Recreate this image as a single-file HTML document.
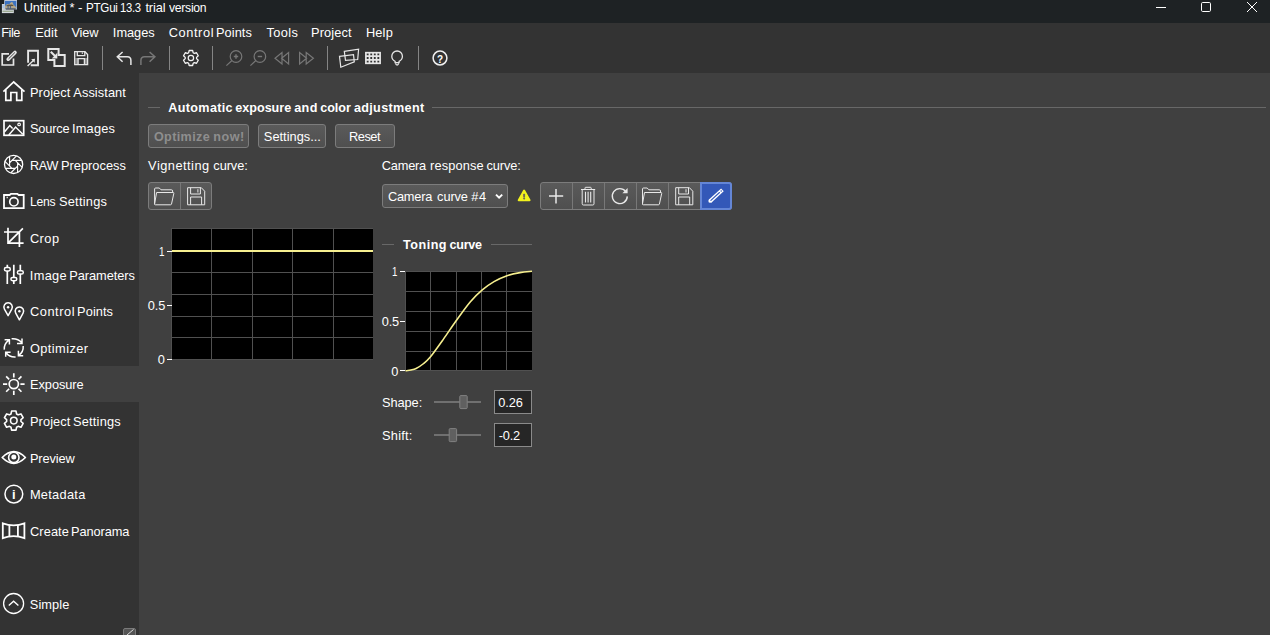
<!DOCTYPE html>
<html lang="en"><head><meta charset="utf-8"><title>Untitled * - PTGui 13.3 trial version</title>
<style>
html,body{margin:0;padding:0;background:#333;}
body{width:1270px;height:635px;overflow:hidden;}
#app{position:relative;width:1270px;height:635px;background:#333333;overflow:hidden;font-family:"Liberation Sans",sans-serif;color:#fff;}
.t{position:absolute;left:0;white-space:nowrap;line-height:16px;height:16px;width:0;color:#fff;}
.t span{position:absolute;top:0;white-space:pre;transform-origin:0 0;}
.b{position:absolute;box-sizing:border-box;}
#titlebar{left:0;top:0;width:1270px;height:23px;background:#1e2224;}
#content{left:139px;top:73px;width:1131px;height:562px;background:#404040;}
#sel{left:0;top:366px;width:139px;height:36px;background:#404040;}
.btn{border:1px solid #7c7c7c;border-radius:3px;background:linear-gradient(#5a5a5a,#4f4f4f);}
.inp{border:1px solid #8a8a8a;background:#262626;}
svg#g{position:absolute;left:0;top:0;}

</style></head>
<body>
<div id="app">
<div class="b" id="titlebar"></div>
<div class="b" id="content"></div>
<div class="b" id="sel"></div>
<div class="b btn" style="left:148px;top:124px;width:101px;height:24px;"></div>
<div class="b btn" style="left:258px;top:124px;width:68px;height:24px;"></div>
<div class="b btn" style="left:335px;top:124px;width:60px;height:24px;"></div>
<div class="b btn" style="left:148px;top:182px;width:64px;height:28px;"></div>
<div class="b btn" style="left:382px;top:184px;width:126px;height:24px;"></div>
<div class="b btn" style="left:540px;top:182px;width:192px;height:28px;"></div>
<div class="b" style="left:700px;top:182px;width:32px;height:28px;background:#3358b8;border:2px solid #6486d6;border-radius:0 3px 3px 0;"></div>
<div class="b inp" style="left:494px;top:390px;width:38px;height:24px;"></div>
<div class="b inp" style="left:494px;top:423px;width:38px;height:24px;"></div>

<svg id="g" width="1270" height="635" viewBox="0 0 1270 635" fill="none" stroke="#fff" stroke-width="1.6" stroke-linecap="butt" stroke-linejoin="miter">
<g stroke-width="1"><path d="M1156 7.5h10"/><rect x="1201.5" y="2.5" width="9" height="9" rx="1.2"/><path d="M1247 2l10 10M1257 2l-10 10"/></g>
<g stroke="none"><rect x="1.9" y="4" width="11.9" height="9.1" fill="#d9dde0"/><rect x="2.5" y="4.6" width="10.7" height="7.6" fill="#c9cfd2"/><rect x="2.5" y="4.6" width="3" height="3.4" fill="#a6c2e6"/><rect x="2.5" y="10.8" width="10.7" height="1" fill="#93a386"/><rect x="4.2" y="0" width="12.8" height="9.5" fill="#b9c6da"/><rect x="5" y="1" width="11.3" height="7.6" fill="#3c73c2"/><path d="M5 8.6V6.3L6.4 4.6L8 3.9L9.2 4.4L10.2 3L11.6 2L12.8 2.6L13.4 4.4L14.8 6L16.3 7.2V8.6Z" fill="#b3a688"/><path d="M7.6 5.2h1v3.2h-1zM9.9 5h1v3.4h-1z" fill="#3f5f94"/><path d="M6.3 5.6L8 4.8L12 4.6L13.6 5.4L13.2 6L6.6 6.2Z" fill="#5d5443"/><rect x="5.8" y="8.6" width="9.8" height="0.9" fill="#2b2d30"/></g>
<g stroke="#858585" stroke-width="1"><path d="M102.5 46v24M169.5 46v24M212.5 46v24M327.5 46v24M418.5 46v24"/></g>
<g stroke="#e6e6e6" stroke-width="1.7">
<path d="M9 53.9H2.2V65H13.5V58.6"/>
<path d="M8.2 59.2L15 52.4" stroke-width="3.6" stroke-linecap="round"/>
<path d="M8.9 58.5L14.6 52.8" stroke="#333" stroke-width="0.9" stroke-linecap="round"/>
<path d="M28.1 62.8V50.8H38V65.2H30.7" stroke-width="1.9"/>
<path d="M27.6 66L33.6 60.2" stroke-width="1.4"/>
<path d="M35 58.8L31.2 59.3L34.6 62.7Z" fill="#e6e6e6" stroke="none"/>
<path d="M48.3 49H58.6V55H64.7V66H54.4V60H48.3Z" stroke-width="2"/>
<path d="M50.8 51.8L55.5 56.5" stroke-width="2"/>
<path d="M57.3 58.4V52.8L51.8 58.4Z" fill="#e6e6e6" stroke="none"/>
</g>
<g stroke="#e6e6e6" stroke-width="1.3">
<path d="M75.3 64.5V58H78V64.5ZM84.6 64.5V58H87.2V64.5Z" fill="#8c8c8c" stroke="none"/>
<path d="M74.7 51.7H85L87.6 54.6V64.6H74.7Z"/>
<path d="M77.3 51.7V55.6H84.8V51.7"/>
<path d="M82.3 52.3V54" stroke-width="1"/>
<path d="M78.1 64.6V58.7H84.4V64.6"/>
</g>
<path d="M122.6 52L117.3 56.7L122.6 61.8M117.6 56.7H127.4Q130.9 56.7 130.9 60.6V65" stroke="#e6e6e6" stroke-width="1.5"/>
<path d="M149.6 52L154.9 56.7L149.6 61.8M154.6 56.7H144.6Q140.9 56.7 140.9 60.6V65" stroke="#777" stroke-width="1.5"/>
<path d="M188.58 52.79 L189.17 50.50 L192.63 50.50 L193.22 52.79 L194.25 53.39 L196.53 52.75 L198.26 55.75 L196.57 57.40 L196.57 58.60 L198.26 60.25 L196.53 63.25 L194.25 62.61 L193.22 63.21 L192.63 65.50 L189.17 65.50 L188.58 63.21 L187.55 62.61 L185.27 63.25 L183.54 60.25 L185.23 58.60 L185.23 57.40 L183.54 55.75 L185.27 52.75 L187.55 53.39Z" stroke="#f4f4f4" stroke-width="1.3" stroke-linejoin="round"/>
<circle cx="190.9" cy="58" r="2.7" stroke="#f4f4f4" stroke-width="1.2"/>
<g stroke="#777" stroke-width="1.2">
<circle cx="236" cy="56.5" r="5.8"/><path d="M231.7 60.8L226.4 65.6"/><path d="M233.8 56.5H238.2M236 54.3V58.7" stroke-width="1.4"/>
<circle cx="259.9" cy="56.5" r="5.8"/><path d="M255.6 60.8L250.4 65.6"/><path d="M257.7 56.5H262.1" stroke-width="1.4"/>
<path d="M282 52.5V64L275 58.3ZM288.6 52.5V64L281.6 58.3Z"/>
<path d="M299.6 52.5V64L306.6 58.3ZM306.2 52.5V64L313.4 58.3Z"/>
</g>
<g stroke="#e6e6e6" stroke-width="1.2">
<path d="M344.3 51.3L358.6 49.1L357.7 59.5L345.5 60.3Z"/>
<path d="M339.5 56.3L353.5 54.7L354.3 61.9L340.8 67.2Z"/>
</g>
<g stroke="#e6e6e6" stroke-width="1.7"><rect x="365.9" y="52.7" width="14.2" height="10.6"/><path d="M369.45 52.7V63.3M373 52.7V63.3M376.55 52.7V63.3M365.9 56.2H380.1M365.9 59.8H380.1"/></g>
<g stroke="#e6e6e6" stroke-width="1.3"><path d="M395.1 62.7V61.3C393.1 60.4 391.8 58.5 391.8 56.3A5.3 5.3 0 0 1 402.4 56.3C402.4 58.5 401.1 60.4 399.1 61.3V62.7Z"/><path d="M395.6 63.2Q395.8 65 397.1 65T398.6 63.2" stroke-width="1.3"/></g>
<circle cx="440" cy="58" r="6.9" stroke="#f0f0f0" stroke-width="1.5"/>
<g stroke="#fff" stroke-width="1.7">
<path d="M3.4 91.6L13.7 82L24.5 91.6" stroke-linejoin="miter"/>
<path d="M5.8 90V100.3H10.9V92.5H16.7V100.3H21.8V90"/>
<rect x="4" y="120.7" width="19.7" height="14.6"/>
<path d="M4.6 131.8L9.8 125.6L12.6 128.6M8.8 135L15.6 127L22.8 134.2" stroke-width="1.5"/>
<circle cx="19.1" cy="124.4" r="1.3" stroke-width="1.1"/>
<circle cx="13.6" cy="164.4" r="9.1" stroke-width="1.3"/>
<path d="M17.60 166.06L10.65 173.01M15.26 168.40L5.43 168.40M11.94 168.40L4.99 161.45M9.60 166.06L9.60 156.23M9.60 162.74L16.55 155.79M11.94 160.40L21.77 160.40M15.26 160.40L22.21 167.35M17.60 162.74L17.60 172.57" stroke-width="1.15"/>
<path d="M4 195H9.6L11 193.8H17.3L18.7 195H23.7V208.2H4Z" stroke-width="1.8"/>
<circle cx="13.9" cy="201.8" r="4.2" stroke-width="1.6"/>
<path d="M7.2 196.8V198.2" stroke-width="1.2"/>
<path d="M8 227.7V243.1H23.6M4 232H19.4V247.1M8.5 242.6L22.9 228.4"/>
<path d="M7.3 264.7V284.1M13.8 264.7V284.1M20.3 264.7V284.1"/>
<g fill="#333" stroke-width="1.5"><rect x="4.4" y="267.5" width="5.9" height="3.4" rx="1.7"/><rect x="10.9" y="277.4" width="5.9" height="3.4" rx="1.7"/><rect x="17.4" y="270.7" width="5.9" height="3.4" rx="1.7"/></g>
<path d="M8.10 315.60L4.43 309.05A4.2 4.2 0 1 1 11.77 309.05Z" stroke-width="1.5" stroke-linejoin="round"/>
<path d="M19.40 319.80L15.72 313.13A4.2 4.2 0 1 1 23.08 313.13Z" stroke-width="1.5" stroke-linejoin="round"/>
<circle cx="8.1" cy="307.3" r="1.2" fill="#fff" stroke="none"/><circle cx="19.4" cy="311.3" r="1.2" fill="#fff" stroke="none"/>
<g stroke-width="1.5">
<path d="M11.6 338.8Q18 338.3 21.6 342.6M17 343.4H22V338.4"/>
<path d="M23.2 346Q23.6 351.8 19 355.2M18.4 350.8V355.8H23.2"/>
<path d="M15.6 357Q9.6 357.4 6.4 353M10.6 352.2H5.7V356.8"/>
<path d="M4.3 349.6Q3.9 343.8 8.6 340.4M4.6 339.8H9.4V344.6"/>
</g>
<circle cx="13.8" cy="384.1" r="4.6"/>
<path d="M20.40 384.10L24.60 384.10M18.47 388.77L21.44 391.74M13.80 390.70L13.80 394.90M9.13 388.77L6.16 391.74M7.20 384.10L3.00 384.10M9.13 379.43L6.16 376.46M13.80 377.50L13.80 373.30M18.47 379.43L21.44 376.46"/>
<path d="M10.99 413.97 L11.60 411.05 L16.00 411.05 L16.61 413.97 L18.13 414.85 L20.97 413.92 L23.17 417.73 L20.95 419.72 L20.95 421.48 L23.17 423.47 L20.97 427.28 L18.13 426.35 L16.61 427.23 L16.00 430.15 L11.60 430.15 L10.99 427.23 L9.47 426.35 L6.63 427.28 L4.43 423.47 L6.65 421.48 L6.65 419.72 L4.43 417.73 L6.63 413.92 L9.47 414.85Z" stroke-width="1.6" stroke-linejoin="round"/>
<circle cx="13.8" cy="420.6" r="3.3" stroke-width="1.5"/>
<path d="M2.2 457.5Q8 451.7 13.8 451.7T25.4 457.5Q19.6 463.3 13.8 463.3T2.2 457.5Z" stroke-linejoin="round"/>
<circle cx="13.8" cy="457.4" r="5.2" stroke-width="1.6"/>
<circle cx="13.8" cy="456.9" r="2.5" fill="#fff" stroke="none"/>
<circle cx="13.85" cy="494.1" r="8.9" stroke-width="1.5"/>
<path d="M2.8 523.3Q13.6 527.3 24.4 523.3V538.1Q13.6 534.1 2.8 538.1Z" stroke-width="1.8"/>
<path d="M9.4 525V536.4M17.9 525V536.4" stroke-width="1.8"/>
<circle cx="13.6" cy="603.5" r="10" stroke-width="1.3"/>
<path d="M8.8 605.6L13.6 601.2L18.4 605.6" stroke-width="1.4"/>
</g>
<rect x="123.5" y="628.5" width="12" height="10" rx="1.5" fill="#555" stroke="#7a7a7a" stroke-width="1"/><path d="M127 635L133.5 629.5" stroke="#ddd" stroke-width="1"/>
<g stroke="#686868" stroke-width="1"><path d="M148 107.5h12M432 107.5H1266M382 244.5h12M491 244.5h41"/></g>
<g stroke="#787878" stroke-width="1"><path d="M180.5 183v26M572.5 183v26M604.5 183v26M636.5 183v26M668.5 183v26"/></g>
<g stroke="#e8e8e8" stroke-width="1">
<path d="M154.6 203.9V189.0Q154.6 188.0 155.6 188.0H159.3L161 189.8H171.4Q172.6 189.8 172.6 191.0V192.5M156.6 192.5H173.2Q174 192.5 173.8 193.5L171.5 204.1Q171.3 204.8 170.5 204.8H155.3Q154.3 204.8 154.6 203.8L156.6 192.5"/>
<path d="M187.6 187.7H201.29999999999998L204.7 191.2V204.79999999999998H187.6ZM190.6 187.7V194.0H200.4V187.7M197.9 189.2V192.5M190.6 204.79999999999998V197.0H201.6V204.79999999999998"/>
<path d="M642.5 203.9V189.0Q642.5 188.0 643.5 188.0H647.1999999999999L648.9 189.8H659.3Q660.5 189.8 660.5 191.0V192.5M644.5 192.5H661.1Q661.9 192.5 661.6999999999999 193.5L659.4 204.1Q659.1999999999999 204.8 658.4 204.8H643.1999999999999Q642.1999999999999 204.8 642.5 203.8L644.5 192.5"/>
<path d="M675.7 187.7H689.4000000000001L692.8000000000001 191.2V204.79999999999998H675.7ZM678.7 187.7V194.0H688.5V187.7M686.0 189.2V192.5M678.7 204.79999999999998V197.0H689.7V204.79999999999998"/>
</g>
<path d="M549 196.1H563.2M556 189V203.4" stroke="#e8e8e8" stroke-width="1.5"/>
<g stroke="#e8e8e8" stroke-width="1"><path d="M581 189.5H595.2M585 189.5V188Q585 187.3 585.8 187.3H590.4Q591.2 187.3 591.2 188V189.5M582.2 189.5V203.8Q582.2 205 583.4 205H592.8Q594 205 594 203.8V189.5"/><path d="M585.5 191.8V202.6M588.1 191.8V202.6M590.7 191.8V202.6" stroke-width="1.1"/></g>
<path d="M625.8 191.6A7.5 7.5 0 1 0 627.3 196.4" stroke="#e8e8e8" stroke-width="1.4"/>
<path d="M627.6 188V193.2H622.4Z" fill="#e8e8e8" stroke="none"/>
<path d="M710.2 201L722.4 189.9" stroke="#fff" stroke-width="3.9"/><circle cx="710.3" cy="200.9" r="1.95" fill="#fff" stroke="none"/>
<path d="M710.9 200.4L719.5 192.5" stroke="#3358b8" stroke-width="1.1" stroke-linecap="round"/><circle cx="721.2" cy="190.9" r="0.75" fill="#3358b8" stroke="none"/>
<path d="M524.1 190.6L529.6 200.2H518.7Z" fill="#f2f21d" stroke="#f2f21d" stroke-width="2" stroke-linejoin="round"/>
<path d="M524.2 193.8V197.4M524.2 198.3V199.6" stroke="#6a6a55" stroke-width="1.3"/>
<path d="M496 194.6L499.1 197.7L502.2 194.6" stroke="#fff" stroke-width="1.9"/>
<g stroke="none"><rect x="172" y="229" width="201" height="131" fill="#000"/><rect x="406" y="271" width="126" height="100" fill="#000"/></g>
<g stroke="#505050" stroke-width="1">
<path d="M171 228.5h202"/>
<path d="M171.5 229v131M211.5 229v131M252.5 229v131M292.5 229v131M333.5 229v131"/>
<path d="M172 251.5h201M172 272.5h201M172 294.5h201M172 316.5h201M172 337.5h201M172 359.5h201"/>
<path d="M405.5 271v100M430.5 271v100M456.5 271v100M481.5 271v100M506.5 271v100"/>
<path d="M406 271.5h126M406 291.5h126M406 311.5h126M406 331.5h126M406 351.5h126M406 370.5h126"/>
</g>
<g stroke="#fff" stroke-width="1"><path d="M167 251.5h5M167 305.5h5M167 359.5h5M400 271.5h5M400 321.5h5M400 370.5h5"/></g>
<path d="M172 251h201" stroke="#f6ef8f" stroke-width="2"/>
<path d="M405.50 370.80C406.42 370.67 409.23 370.38 411.00 370.00C412.77 369.62 414.10 369.50 416.10 368.50C418.10 367.50 420.63 365.90 423.00 364.00C425.37 362.10 426.92 361.20 430.30 357.10C433.68 353.00 438.97 345.50 443.30 339.40C447.63 333.30 451.78 326.78 456.30 320.50C460.82 314.22 466.07 306.80 470.40 301.70C474.73 296.60 478.37 293.25 482.30 289.90C486.23 286.55 489.88 283.97 494.00 281.60C498.12 279.23 502.67 277.20 507.00 275.70C511.33 274.20 515.83 273.33 520.00 272.60C524.17 271.87 530.00 271.52 532.00 271.30" stroke="#f6ef8f" stroke-width="1.6"/>
<g stroke="#707070" stroke-width="2"><path d="M434 402h47M434 435h47"/></g>
<g fill="#606060" stroke="#828282" stroke-width="1"><rect x="459.8" y="395.6" width="7.4" height="13" rx="1"/><rect x="449.2" y="428.6" width="7.4" height="13" rx="1"/></g>
</svg>
<div class="t" style="top:-0.09px;font-size:12.8px;"><span style="left:23.71px;letter-spacing:-0.155px;">Untitled</span> <span style="left:69.40px;">*</span> <span style="left:77.81px;transform:scaleX(1.0523);">-</span> <span style="left:85.64px;letter-spacing:-0.300px;transform:scaleX(0.9105);">PTGui</span> <span style="left:120.14px;letter-spacing:-0.300px;transform:scaleX(0.8806);">13.3</span> <span style="left:145.41px;letter-spacing:-0.096px;">trial</span> <span style="left:169.16px;letter-spacing:-0.300px;transform:scaleX(0.9531);">version</span></div>
<div class="t" style="top:24.91px;font-size:12.8px;"><span style="left:1.20px;letter-spacing:-0.469px;">File</span></div>
<div class="t" style="top:24.91px;font-size:12.8px;"><span style="left:35.20px;letter-spacing:0.128px;">Edit</span></div>
<div class="t" style="top:24.91px;font-size:12.8px;"><span style="left:71.50px;letter-spacing:-0.198px;">View</span></div>
<div class="t" style="top:24.91px;font-size:12.8px;"><span style="left:112.87px;letter-spacing:-0.027px;">Images</span></div>
<div class="t" style="top:24.91px;font-size:12.8px;"><span style="left:168.81px;letter-spacing:0.572px;">Control</span> <span style="left:216.00px;letter-spacing:0.048px;">Points</span></div>
<div class="t" style="top:24.91px;font-size:12.8px;"><span style="left:266.47px;letter-spacing:0.367px;">Tools</span></div>
<div class="t" style="top:24.91px;font-size:12.8px;"><span style="left:311.10px;letter-spacing:0.115px;">Project</span></div>
<div class="t" style="top:24.91px;font-size:12.8px;"><span style="left:365.90px;letter-spacing:0.182px;">Help</span></div>
<div class="t" style="top:84.91px;font-size:12.8px;"><span style="left:29.90px;letter-spacing:0.115px;">Project</span> <span style="left:73.32px;letter-spacing:0.073px;">Assistant</span></div>
<div class="t" style="top:120.91px;font-size:12.8px;"><span style="left:29.97px;letter-spacing:-0.162px;">Source</span> <span style="left:72.07px;letter-spacing:0.173px;">Images</span></div>
<div class="t" style="top:157.91px;font-size:12.8px;"><span style="left:29.92px;letter-spacing:-0.300px;transform:scaleX(0.9819);">RAW</span> <span style="left:60.90px;letter-spacing:0.030px;">Preprocess</span></div>
<div class="t" style="top:193.91px;font-size:12.8px;"><span style="left:29.95px;letter-spacing:-0.300px;transform:scaleX(0.9511);">Lens</span> <span style="left:58.97px;letter-spacing:0.241px;">Settings</span></div>
<div class="t" style="top:230.91px;font-size:12.8px;"><span style="left:29.91px;letter-spacing:0.476px;">Crop</span></div>
<div class="t" style="top:267.91px;font-size:12.8px;"><span style="left:29.77px;letter-spacing:0.342px;">Image</span> <span style="left:69.30px;letter-spacing:-0.061px;">Parameters</span></div>
<div class="t" style="top:303.91px;font-size:12.8px;"><span style="left:29.91px;letter-spacing:0.572px;">Control</span> <span style="left:77.10px;letter-spacing:0.068px;">Points</span></div>
<div class="t" style="top:340.91px;font-size:12.8px;"><span style="left:29.95px;letter-spacing:0.418px;">Optimizer</span></div>
<div class="t" style="top:376.91px;font-size:12.8px;"><span style="left:30.10px;letter-spacing:-0.079px;">Exposure</span></div>
<div class="t" style="top:413.91px;font-size:12.8px;"><span style="left:29.90px;letter-spacing:0.115px;">Project</span> <span style="left:72.97px;letter-spacing:0.213px;">Settings</span></div>
<div class="t" style="top:450.91px;font-size:12.8px;"><span style="left:29.90px;letter-spacing:-0.103px;">Preview</span></div>
<div class="t" style="top:486.91px;font-size:12.8px;"><span style="left:29.90px;letter-spacing:0.296px;">Metadata</span></div>
<div class="t" style="top:523.91px;font-size:12.8px;"><span style="left:29.91px;letter-spacing:0.118px;">Create</span> <span style="left:71.00px;letter-spacing:-0.103px;">Panorama</span></div>
<div class="t" style="top:596.91px;font-size:12.8px;"><span style="left:29.77px;letter-spacing:0.102px;">Simple</span></div>
<div class="t" style="top:99.98px;font-size:12.6px;font-weight:700;"><span style="left:168.35px;letter-spacing:0.333px;">Automatic</span> <span style="left:235.36px;letter-spacing:-0.029px;">exposure</span> <span style="left:294.18px;letter-spacing:0.397px;">and</span> <span style="left:320.16px;letter-spacing:-0.035px;">color</span> <span style="left:353.88px;letter-spacing:0.345px;">adjustment</span></div>
<div class="t" style="top:128.98px;font-size:12.6px;font-weight:700;color:#8e8e8e;"><span style="left:153.93px;letter-spacing:0.376px;">Optimize</span> <span style="left:213.23px;letter-spacing:0.540px;">now!</span></div>
<div class="t" style="top:128.91px;font-size:12.8px;"><span style="left:263.87px;letter-spacing:0.012px;">Settings...</span></div>
<div class="t" style="top:128.91px;font-size:12.8px;"><span style="left:349.10px;letter-spacing:-0.499px;">Reset</span></div>
<div class="t" style="top:157.91px;font-size:12.8px;"><span style="left:148.10px;letter-spacing:0.485px;">Vignetting</span> <span style="left:213.31px;letter-spacing:-0.070px;">curve:</span></div>
<div class="t" style="top:157.91px;font-size:12.8px;"><span style="left:381.81px;letter-spacing:-0.220px;">Camera</span> <span style="left:430.11px;letter-spacing:0.136px;">response</span> <span style="left:486.51px;letter-spacing:-0.090px;">curve:</span></div>
<div class="t" style="top:188.91px;font-size:12.8px;"><span style="left:387.91px;letter-spacing:-0.220px;">Camera</span> <span style="left:437.11px;letter-spacing:-0.124px;">curve</span> <span style="left:471.30px;letter-spacing:0.489px;">#4</span></div>
<div class="t" style="top:236.98px;font-size:12.6px;font-weight:700;"><span style="left:402.91px;letter-spacing:0.526px;">Toning</span> <span style="left:449.56px;letter-spacing:-0.299px;">curve</span></div>
<div class="t" style="top:243.91px;font-size:12.8px;"><span style="left:158.99px;transform:scaleX(0.7776);">1</span></div>
<div class="t" style="top:297.91px;font-size:12.8px;"><span style="left:147.75px;letter-spacing:-0.084px;">0.5</span></div>
<div class="t" style="top:351.91px;font-size:12.8px;"><span style="left:157.85px;">0</span></div>
<div class="t" style="top:263.91px;font-size:12.8px;"><span style="left:392.41px;transform:scaleX(0.7595);">1</span></div>
<div class="t" style="top:313.91px;font-size:12.8px;"><span style="left:381.85px;letter-spacing:-0.234px;">0.5</span></div>
<div class="t" style="top:363.91px;font-size:12.8px;"><span style="left:391.25px;">0</span></div>
<div class="t" style="top:394.91px;font-size:12.8px;"><span style="left:382.07px;letter-spacing:-0.087px;">Shape:</span></div>
<div class="t" style="top:427.91px;font-size:12.8px;"><span style="left:382.07px;letter-spacing:0.234px;">Shift:</span></div>
<div class="t" style="top:394.91px;font-size:12.8px;"><span style="left:498.25px;letter-spacing:-0.120px;">0.26</span></div>
<div class="t" style="top:427.91px;font-size:12.8px;"><span style="left:498.79px;letter-spacing:-0.217px;">-0.2</span></div>
<div class="t" style="top:50.68px;font-size:10.6px;font-weight:700;"><span style="left:437.30px;transform:scaleX(0.9452);">?</span></div>
<div class="t" style="top:486.60px;font-size:13.7px;font-weight:700;"><span style="left:12.06px;transform:scaleX(0.9452);">i</span></div>
<div class="t" style="top:189.18px;font-size:8px;font-weight:700;color:#6a6a50;"><span style="left:522.44px;transform:scaleX(1.4757);">!</span></div>
</div>
</body></html>
